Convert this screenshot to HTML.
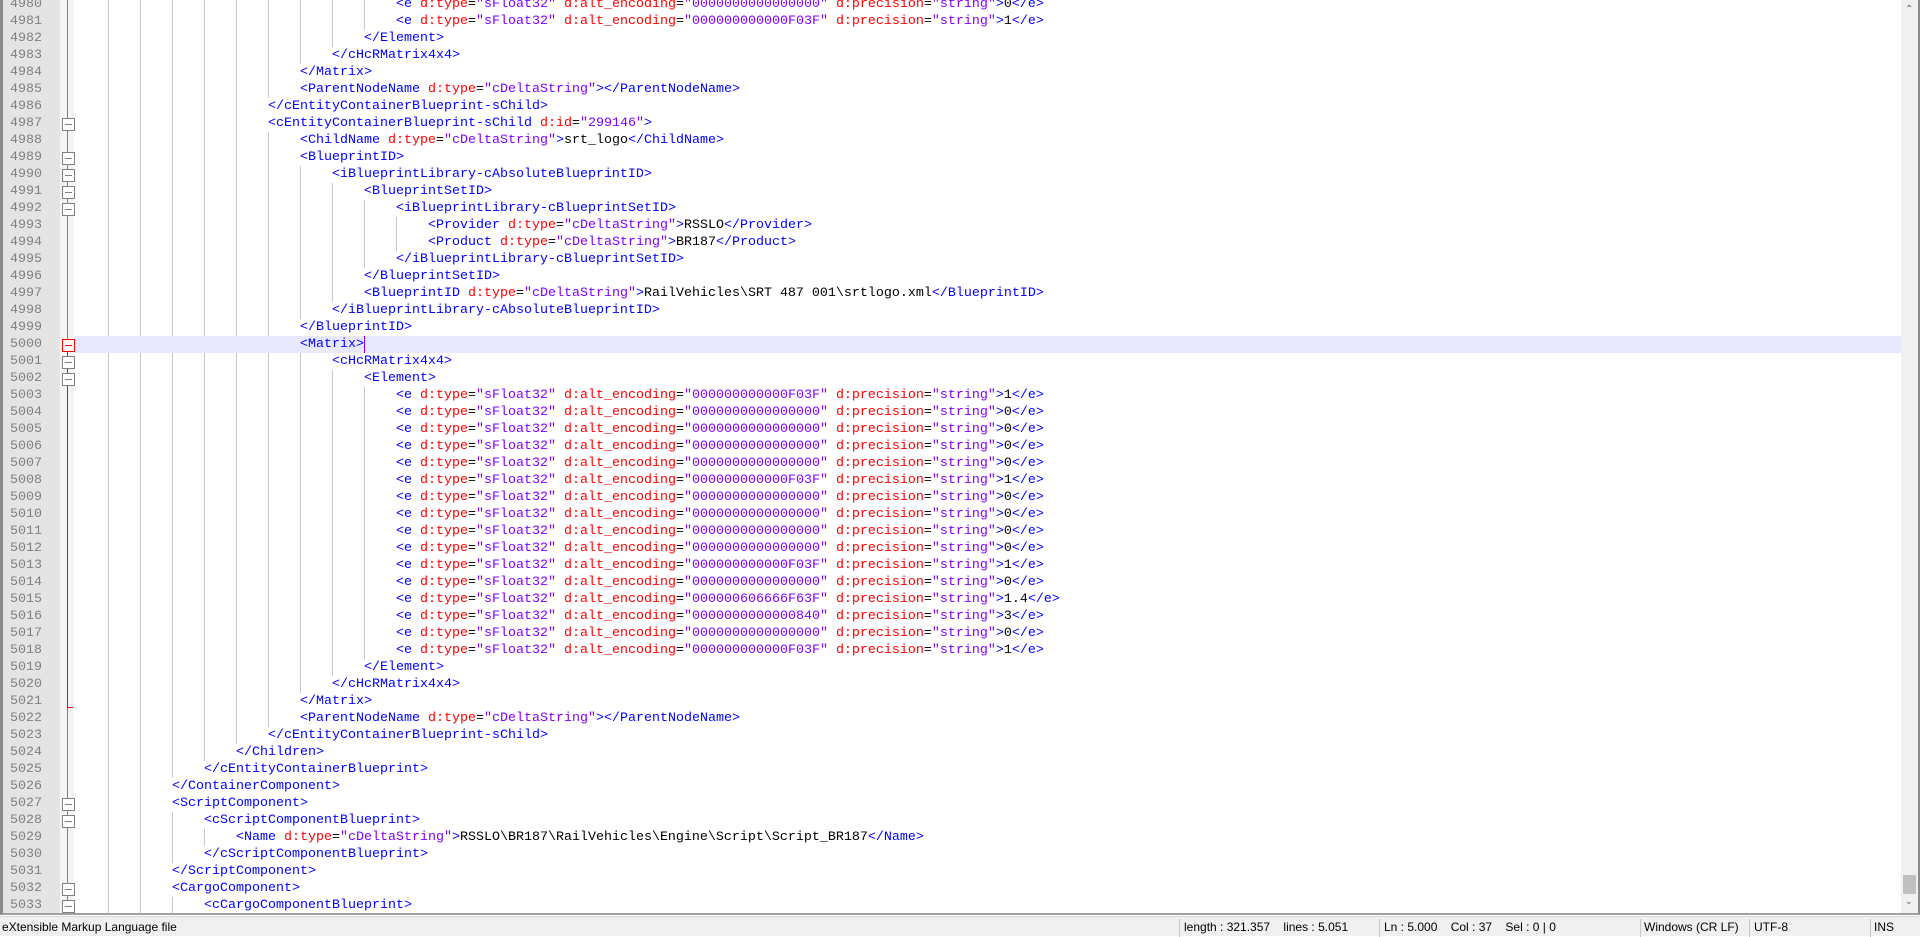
<!DOCTYPE html>
<html><head><meta charset="utf-8"><style>
*{margin:0;padding:0;box-sizing:border-box}
body{width:1920px;height:936px;overflow:hidden;background:#fff;position:relative;font-family:"Liberation Mono",monospace;font-size:13.33px}
#ed{position:absolute;left:0;top:0;width:1920px;height:915px;overflow:hidden;border-left:3px solid #8a8a8a;border-right:2px solid #8a8a8a;border-bottom:2px solid #a0a0a0}
#gut{position:absolute;left:0;top:0;width:57px;height:100%;background:#e4e4e4}
#fm{position:absolute;left:57px;top:0;width:14px;height:100%;background:#f4f4f4}
#fl{position:absolute;left:64px;top:0;width:1px;height:100%;background:#808080}
#fr{position:absolute;left:64px;top:340px;width:1px;height:368px;background:#f00}
#frt{position:absolute;left:64px;top:707px;width:6px;height:1px;background:#f00}
#lines{position:absolute;left:-3px;top:-4px;width:1910px}
.r{height:17px;line-height:17px;position:relative;white-space:pre}
.r .n{position:absolute;left:0;width:42px;text-align:right;color:#808080}
.r .c{position:absolute;left:calc(76px + var(--l)*32px)}
.r::before{content:"";position:absolute;left:108px;top:0;height:17px;width:calc((var(--l) - 1)*32px);background:repeating-linear-gradient(to right,#c8c8c8 0 1px,transparent 1px 32px)}
.r.f::after{content:"";position:absolute;left:62px;top:3px;width:11px;height:11px;border:1px solid #808080;background:#fff linear-gradient(#808080,#808080) center/7px 1px no-repeat}
.r.fr::after{border-color:#f00;background:#fff linear-gradient(#f00,#f00) center/7px 1px no-repeat}
.hl .bg{position:absolute;left:74px;right:0;top:0;height:17px;background:#e8e8ff}
.t{color:#0000ff}.a{color:#ff0000}.v{color:#8000ff}
#caret{position:absolute;left:361px;top:336px;width:1px;height:17px;background:#8000ff}
#sb{position:absolute;right:0;top:0;width:17px;height:913px;background:#f0f0f0}
#sb .th{position:absolute;left:2px;top:875px;width:13px;height:19px;background:#c0c0c0}
#sb .up{position:absolute;left:4px;top:4px;font-size:10px;color:#606060;font-family:"DejaVu Sans",sans-serif}
#sb .dn{position:absolute;left:4px;top:897px;font-size:9px;color:#606060;font-family:"DejaVu Sans",sans-serif}
#st{position:absolute;left:0;top:916px;width:1920px;height:20px;background:#f0f0f0;font-family:"Liberation Sans",sans-serif;font-size:12px;line-height:20px;color:#000;border-top:1px solid #d8d8d8}
#st span{position:absolute;top:0;white-space:pre}
#st i{position:absolute;top:2px;width:1px;height:18px;background:#c8c8c8}
</style></head><body>
<div id="ed">
<div id="gut"></div><div id="fm"></div><div id="fl"></div><div id="fr"></div><div id="frt"></div>
<div id="lines">
<div class="r" style="--l:10"><span class="n">4980</span><span class="c"><span class="t">&lt;e </span><span class="a">d:type</span>=<span class="v">"sFloat32"</span> <span class="a">d:alt_encoding</span>=<span class="v">"0000000000000000"</span> <span class="a">d:precision</span>=<span class="v">"string"</span><span class="t">&gt;</span>0<span class="t">&lt;/e&gt;</span></span></div>
<div class="r" style="--l:10"><span class="n">4981</span><span class="c"><span class="t">&lt;e </span><span class="a">d:type</span>=<span class="v">"sFloat32"</span> <span class="a">d:alt_encoding</span>=<span class="v">"000000000000F03F"</span> <span class="a">d:precision</span>=<span class="v">"string"</span><span class="t">&gt;</span>1<span class="t">&lt;/e&gt;</span></span></div>
<div class="r" style="--l:9"><span class="n">4982</span><span class="c t">&lt;/Element&gt;</span></div>
<div class="r" style="--l:8"><span class="n">4983</span><span class="c t">&lt;/cHcRMatrix4x4&gt;</span></div>
<div class="r" style="--l:7"><span class="n">4984</span><span class="c t">&lt;/Matrix&gt;</span></div>
<div class="r" style="--l:7"><span class="n">4985</span><span class="c"><span class="t">&lt;ParentNodeName </span><span class="a">d:type</span>=<span class="v">"cDeltaString"</span><span class="t">&gt;&lt;/ParentNodeName&gt;</span></span></div>
<div class="r" style="--l:6"><span class="n">4986</span><span class="c t">&lt;/cEntityContainerBlueprint-sChild&gt;</span></div>
<div class="r f" style="--l:6"><span class="n">4987</span><span class="c"><span class="t">&lt;cEntityContainerBlueprint-sChild </span><span class="a">d:id</span>=<span class="v">"299146"</span><span class="t">&gt;</span></span></div>
<div class="r" style="--l:7"><span class="n">4988</span><span class="c"><span class="t">&lt;ChildName </span><span class="a">d:type</span>=<span class="v">"cDeltaString"</span><span class="t">&gt;</span>srt_logo<span class="t">&lt;/ChildName&gt;</span></span></div>
<div class="r f" style="--l:7"><span class="n">4989</span><span class="c t">&lt;BlueprintID&gt;</span></div>
<div class="r f" style="--l:8"><span class="n">4990</span><span class="c t">&lt;iBlueprintLibrary-cAbsoluteBlueprintID&gt;</span></div>
<div class="r f" style="--l:9"><span class="n">4991</span><span class="c t">&lt;BlueprintSetID&gt;</span></div>
<div class="r f" style="--l:10"><span class="n">4992</span><span class="c t">&lt;iBlueprintLibrary-cBlueprintSetID&gt;</span></div>
<div class="r" style="--l:11"><span class="n">4993</span><span class="c"><span class="t">&lt;Provider </span><span class="a">d:type</span>=<span class="v">"cDeltaString"</span><span class="t">&gt;</span>RSSLO<span class="t">&lt;/Provider&gt;</span></span></div>
<div class="r" style="--l:11"><span class="n">4994</span><span class="c"><span class="t">&lt;Product </span><span class="a">d:type</span>=<span class="v">"cDeltaString"</span><span class="t">&gt;</span>BR187<span class="t">&lt;/Product&gt;</span></span></div>
<div class="r" style="--l:10"><span class="n">4995</span><span class="c t">&lt;/iBlueprintLibrary-cBlueprintSetID&gt;</span></div>
<div class="r" style="--l:9"><span class="n">4996</span><span class="c t">&lt;/BlueprintSetID&gt;</span></div>
<div class="r" style="--l:9"><span class="n">4997</span><span class="c"><span class="t">&lt;BlueprintID </span><span class="a">d:type</span>=<span class="v">"cDeltaString"</span><span class="t">&gt;</span>RailVehicles\SRT 487 001\srtlogo.xml<span class="t">&lt;/BlueprintID&gt;</span></span></div>
<div class="r" style="--l:8"><span class="n">4998</span><span class="c t">&lt;/iBlueprintLibrary-cAbsoluteBlueprintID&gt;</span></div>
<div class="r" style="--l:7"><span class="n">4999</span><span class="c t">&lt;/BlueprintID&gt;</span></div>
<div class="r f fr hl" style="--l:7"><span class="bg"></span><span class="n">5000</span><span class="c t">&lt;Matrix&gt;</span></div>
<div class="r f" style="--l:8"><span class="n">5001</span><span class="c t">&lt;cHcRMatrix4x4&gt;</span></div>
<div class="r f" style="--l:9"><span class="n">5002</span><span class="c t">&lt;Element&gt;</span></div>
<div class="r" style="--l:10"><span class="n">5003</span><span class="c"><span class="t">&lt;e </span><span class="a">d:type</span>=<span class="v">"sFloat32"</span> <span class="a">d:alt_encoding</span>=<span class="v">"000000000000F03F"</span> <span class="a">d:precision</span>=<span class="v">"string"</span><span class="t">&gt;</span>1<span class="t">&lt;/e&gt;</span></span></div>
<div class="r" style="--l:10"><span class="n">5004</span><span class="c"><span class="t">&lt;e </span><span class="a">d:type</span>=<span class="v">"sFloat32"</span> <span class="a">d:alt_encoding</span>=<span class="v">"0000000000000000"</span> <span class="a">d:precision</span>=<span class="v">"string"</span><span class="t">&gt;</span>0<span class="t">&lt;/e&gt;</span></span></div>
<div class="r" style="--l:10"><span class="n">5005</span><span class="c"><span class="t">&lt;e </span><span class="a">d:type</span>=<span class="v">"sFloat32"</span> <span class="a">d:alt_encoding</span>=<span class="v">"0000000000000000"</span> <span class="a">d:precision</span>=<span class="v">"string"</span><span class="t">&gt;</span>0<span class="t">&lt;/e&gt;</span></span></div>
<div class="r" style="--l:10"><span class="n">5006</span><span class="c"><span class="t">&lt;e </span><span class="a">d:type</span>=<span class="v">"sFloat32"</span> <span class="a">d:alt_encoding</span>=<span class="v">"0000000000000000"</span> <span class="a">d:precision</span>=<span class="v">"string"</span><span class="t">&gt;</span>0<span class="t">&lt;/e&gt;</span></span></div>
<div class="r" style="--l:10"><span class="n">5007</span><span class="c"><span class="t">&lt;e </span><span class="a">d:type</span>=<span class="v">"sFloat32"</span> <span class="a">d:alt_encoding</span>=<span class="v">"0000000000000000"</span> <span class="a">d:precision</span>=<span class="v">"string"</span><span class="t">&gt;</span>0<span class="t">&lt;/e&gt;</span></span></div>
<div class="r" style="--l:10"><span class="n">5008</span><span class="c"><span class="t">&lt;e </span><span class="a">d:type</span>=<span class="v">"sFloat32"</span> <span class="a">d:alt_encoding</span>=<span class="v">"000000000000F03F"</span> <span class="a">d:precision</span>=<span class="v">"string"</span><span class="t">&gt;</span>1<span class="t">&lt;/e&gt;</span></span></div>
<div class="r" style="--l:10"><span class="n">5009</span><span class="c"><span class="t">&lt;e </span><span class="a">d:type</span>=<span class="v">"sFloat32"</span> <span class="a">d:alt_encoding</span>=<span class="v">"0000000000000000"</span> <span class="a">d:precision</span>=<span class="v">"string"</span><span class="t">&gt;</span>0<span class="t">&lt;/e&gt;</span></span></div>
<div class="r" style="--l:10"><span class="n">5010</span><span class="c"><span class="t">&lt;e </span><span class="a">d:type</span>=<span class="v">"sFloat32"</span> <span class="a">d:alt_encoding</span>=<span class="v">"0000000000000000"</span> <span class="a">d:precision</span>=<span class="v">"string"</span><span class="t">&gt;</span>0<span class="t">&lt;/e&gt;</span></span></div>
<div class="r" style="--l:10"><span class="n">5011</span><span class="c"><span class="t">&lt;e </span><span class="a">d:type</span>=<span class="v">"sFloat32"</span> <span class="a">d:alt_encoding</span>=<span class="v">"0000000000000000"</span> <span class="a">d:precision</span>=<span class="v">"string"</span><span class="t">&gt;</span>0<span class="t">&lt;/e&gt;</span></span></div>
<div class="r" style="--l:10"><span class="n">5012</span><span class="c"><span class="t">&lt;e </span><span class="a">d:type</span>=<span class="v">"sFloat32"</span> <span class="a">d:alt_encoding</span>=<span class="v">"0000000000000000"</span> <span class="a">d:precision</span>=<span class="v">"string"</span><span class="t">&gt;</span>0<span class="t">&lt;/e&gt;</span></span></div>
<div class="r" style="--l:10"><span class="n">5013</span><span class="c"><span class="t">&lt;e </span><span class="a">d:type</span>=<span class="v">"sFloat32"</span> <span class="a">d:alt_encoding</span>=<span class="v">"000000000000F03F"</span> <span class="a">d:precision</span>=<span class="v">"string"</span><span class="t">&gt;</span>1<span class="t">&lt;/e&gt;</span></span></div>
<div class="r" style="--l:10"><span class="n">5014</span><span class="c"><span class="t">&lt;e </span><span class="a">d:type</span>=<span class="v">"sFloat32"</span> <span class="a">d:alt_encoding</span>=<span class="v">"0000000000000000"</span> <span class="a">d:precision</span>=<span class="v">"string"</span><span class="t">&gt;</span>0<span class="t">&lt;/e&gt;</span></span></div>
<div class="r" style="--l:10"><span class="n">5015</span><span class="c"><span class="t">&lt;e </span><span class="a">d:type</span>=<span class="v">"sFloat32"</span> <span class="a">d:alt_encoding</span>=<span class="v">"000000606666F63F"</span> <span class="a">d:precision</span>=<span class="v">"string"</span><span class="t">&gt;</span>1.4<span class="t">&lt;/e&gt;</span></span></div>
<div class="r" style="--l:10"><span class="n">5016</span><span class="c"><span class="t">&lt;e </span><span class="a">d:type</span>=<span class="v">"sFloat32"</span> <span class="a">d:alt_encoding</span>=<span class="v">"0000000000000840"</span> <span class="a">d:precision</span>=<span class="v">"string"</span><span class="t">&gt;</span>3<span class="t">&lt;/e&gt;</span></span></div>
<div class="r" style="--l:10"><span class="n">5017</span><span class="c"><span class="t">&lt;e </span><span class="a">d:type</span>=<span class="v">"sFloat32"</span> <span class="a">d:alt_encoding</span>=<span class="v">"0000000000000000"</span> <span class="a">d:precision</span>=<span class="v">"string"</span><span class="t">&gt;</span>0<span class="t">&lt;/e&gt;</span></span></div>
<div class="r" style="--l:10"><span class="n">5018</span><span class="c"><span class="t">&lt;e </span><span class="a">d:type</span>=<span class="v">"sFloat32"</span> <span class="a">d:alt_encoding</span>=<span class="v">"000000000000F03F"</span> <span class="a">d:precision</span>=<span class="v">"string"</span><span class="t">&gt;</span>1<span class="t">&lt;/e&gt;</span></span></div>
<div class="r" style="--l:9"><span class="n">5019</span><span class="c t">&lt;/Element&gt;</span></div>
<div class="r" style="--l:8"><span class="n">5020</span><span class="c t">&lt;/cHcRMatrix4x4&gt;</span></div>
<div class="r" style="--l:7"><span class="n">5021</span><span class="c t">&lt;/Matrix&gt;</span></div>
<div class="r" style="--l:7"><span class="n">5022</span><span class="c"><span class="t">&lt;ParentNodeName </span><span class="a">d:type</span>=<span class="v">"cDeltaString"</span><span class="t">&gt;&lt;/ParentNodeName&gt;</span></span></div>
<div class="r" style="--l:6"><span class="n">5023</span><span class="c t">&lt;/cEntityContainerBlueprint-sChild&gt;</span></div>
<div class="r" style="--l:5"><span class="n">5024</span><span class="c t">&lt;/Children&gt;</span></div>
<div class="r" style="--l:4"><span class="n">5025</span><span class="c t">&lt;/cEntityContainerBlueprint&gt;</span></div>
<div class="r" style="--l:3"><span class="n">5026</span><span class="c t">&lt;/ContainerComponent&gt;</span></div>
<div class="r f" style="--l:3"><span class="n">5027</span><span class="c t">&lt;ScriptComponent&gt;</span></div>
<div class="r f" style="--l:4"><span class="n">5028</span><span class="c t">&lt;cScriptComponentBlueprint&gt;</span></div>
<div class="r" style="--l:5"><span class="n">5029</span><span class="c"><span class="t">&lt;Name </span><span class="a">d:type</span>=<span class="v">"cDeltaString"</span><span class="t">&gt;</span>RSSLO\BR187\RailVehicles\Engine\Script\Script_BR187<span class="t">&lt;/Name&gt;</span></span></div>
<div class="r" style="--l:4"><span class="n">5030</span><span class="c t">&lt;/cScriptComponentBlueprint&gt;</span></div>
<div class="r" style="--l:3"><span class="n">5031</span><span class="c t">&lt;/ScriptComponent&gt;</span></div>
<div class="r f" style="--l:3"><span class="n">5032</span><span class="c t">&lt;CargoComponent&gt;</span></div>
<div class="r f" style="--l:4"><span class="n">5033</span><span class="c t">&lt;cCargoComponentBlueprint&gt;</span></div>
</div>
<div id="caret"></div>
<div id="sb"><span class="up">⌃</span><div class="th"></div><span class="dn">⌄</span></div>
</div>
<div id="st">
<span style="left:2px">eXtensible Markup Language file</span>
<i style="left:1179px"></i><span style="left:1184px">length : 321.357    lines : 5.051</span>
<i style="left:1379px"></i><span style="left:1384px">Ln : 5.000    Col : 37    Sel : 0 | 0</span>
<i style="left:1640px"></i><span style="left:1644px">Windows (CR LF)</span>
<i style="left:1749px"></i><span style="left:1754px">UTF-8</span>
<i style="left:1870px"></i><span style="left:1874px">INS</span>
</div>
</body></html>
